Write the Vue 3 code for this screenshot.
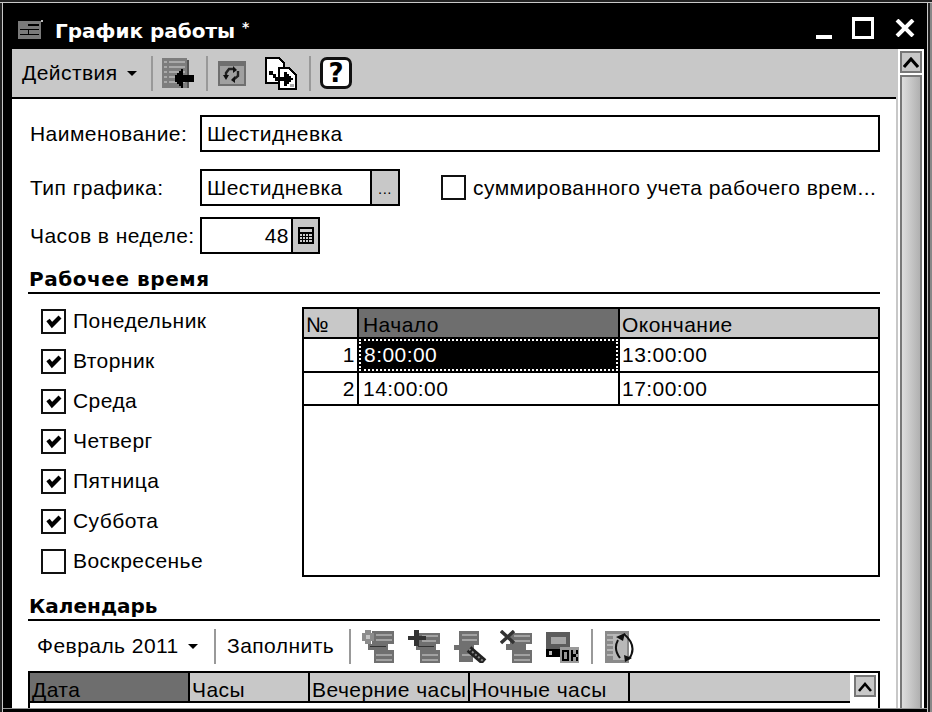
<script setup>
const days = [
  { name: 'Понедельник', on: true },
  { name: 'Вторник', on: true },
  { name: 'Среда', on: true },
  { name: 'Четверг', on: true },
  { name: 'Пятница', on: true },
  { name: 'Суббота', on: true },
  { name: 'Воскресенье', on: false }
]
</script>

<template>
  <div class="win">
    <div class="title">
      <svg class="t-icon" width="25" height="19" viewBox="0 0 25 19" shape-rendering="crispEdges">
        <rect x="0" y="1" width="23" height="18" fill="#7a7a7a"/>
        <rect x="23" y="0" width="2" height="2" fill="#bbb"/>
        <rect x="10" y="4" width="11" height="2" fill="#000"/>
        <rect x="2" y="9" width="19" height="1" fill="#000"/>
        <rect x="2" y="14" width="19" height="1" fill="#000"/>
        <rect x="10" y="9" width="1" height="6" fill="#000"/>
      </svg>
      <span class="t-text">График работы <span class="t-star">*</span></span>
      <div class="t-btns">
        <span class="b-min"></span>
        <span class="b-max"></span>
        <svg class="b-close" width="20" height="18" viewBox="0 0 20 18"><path d="M2 1 L18 17 M18 1 L2 17" stroke="#fff" stroke-width="4"/></svg>
      </div>
    </div>

    <div class="body">
      <div class="left">
        <div class="toolbar">
          <span class="tb-menu">Действия <i class="arrow"></i></span>
          <i class="sep s1"></i>
          <svg class="ic i-back" width="33" height="31" viewBox="0 0 33 31" shape-rendering="crispEdges">
            <rect x="0" y="0" width="25" height="30" fill="#7d7d7d"/>
            <rect x="25" y="2" width="2" height="28" fill="#555"/>
            <g fill="#a9a9a9">
              <rect x="7" y="3" width="16" height="2"/><rect x="7" y="8" width="16" height="2"/>
              <rect x="7" y="13" width="16" height="2"/><rect x="7" y="18" width="16" height="2"/>
              <rect x="7" y="23" width="16" height="2"/>
              <rect x="2" y="3" width="3" height="2"/><rect x="2" y="8" width="3" height="2"/>
              <rect x="2" y="13" width="3" height="2"/><rect x="2" y="18" width="3" height="2"/>
              <rect x="2" y="23" width="3" height="2"/>
            </g>
            <path d="M13 17h2v-2h2v-2h2v-2h2v6h11v7H21v6h-2v-2h-2v-2h-2v-2h-2z" fill="#000"/>
          </svg>
          <i class="sep s2"></i>
          <svg class="ic i-ref" width="28" height="25" viewBox="0 0 28 25">
            <rect width="28" height="25" fill="#6f6f6f"/>
            <rect x="2" y="5" width="24" height="18" fill="#a0a0a0"/>
            <path d="M16 8 L11 8 L8 12 L8 15 M20 10 L20 15 L15 19" fill="none" stroke="#222" stroke-width="2.4"/>
            <path d="M5 14 L11 14 L8 19 Z M15 5 L19 9 L15 12 Z M13 19 L17 15 L17 22 Z" fill="#111"/>
          </svg>
          <svg class="ic i-copy" width="33" height="33" viewBox="0 0 33 33" shape-rendering="crispEdges">
            <path d="M1 1h13l5 5v20H1z" fill="#fff" stroke="#000" stroke-width="2"/>
            <path d="M14 11h10l7 7v14H14z" fill="#fff" stroke="#000" stroke-width="2"/>
            <path d="M4 14h4v3h3v3h8v-5h3v2h2v2h2v2h2v2h-2v2h-2v2h-2v2h-3v-5h-9v-3H8v-3H4z" fill="#000"/>
            <rect x="25" y="27" width="4" height="3" fill="#aaa"/>
          </svg>
          <i class="sep s3"></i>
          <span class="ic i-help">?</span>
        </div>
        <div class="form">
          <div class="row r1">
            <label class="lbl">Наименование:</label>
            <div class="field f-name">Шестидневка</div>
          </div>
          <div class="row r2">
            <label class="lbl">Тип графика:</label>
            <div class="field f-type">Шестидневка<span class="sel">...</span></div>
            <span class="cb cb-sum"></span>
            <span class="sum-label">суммированного учета рабочего врем...</span>
          </div>
          <div class="row r3">
            <label class="lbl">Часов в неделе:</label>
            <div class="field f-hours"><span class="num">48</span><span class="calc">
              <svg width="16" height="17" viewBox="0 0 16 17" shape-rendering="crispEdges">
                <rect width="16" height="17" fill="#000"/>
                <rect x="2" y="2" width="12" height="3" fill="#ccc"/>
                <g fill="#ccc">
                  <rect x="2" y="7" width="2" height="2"/><rect x="5" y="7" width="2" height="2"/><rect x="8" y="7" width="2" height="2"/><rect x="11" y="7" width="3" height="2"/>
                  <rect x="2" y="10" width="2" height="2"/><rect x="5" y="10" width="2" height="2"/><rect x="8" y="10" width="2" height="2"/><rect x="11" y="10" width="3" height="2"/>
                  <rect x="2" y="13" width="2" height="2"/><rect x="5" y="13" width="2" height="2"/><rect x="8" y="13" width="2" height="2"/><rect x="11" y="13" width="3" height="2"/>
                </g>
              </svg>
            </span></div>
          </div>

          <div class="section s-work">Рабочее время</div>

          <div class="work">
            <div class="days">
              <div v-for="d in days" :key="d.name" class="day">
                <span class="cb">
                  <svg v-if="d.on" width="20" height="20" viewBox="0 0 20 20"><path d="M4 9 L8 14 L16 6" fill="none" stroke="#000" stroke-width="4.2"/></svg>
                </span>
                <span class="day-name">{{ d.name }}</span>
              </div>
            </div>
            <div class="grid">
              <div class="g-head">
                <span class="c-n">№</span>
                <span class="c-a active">Начало</span>
                <span class="c-b">Окончание</span>
              </div>
              <div class="g-row g-first">
                <span class="c-n num-cell">1</span>
                <span class="c-a selected"><span>8:00:00</span></span>
                <span class="c-b">13:00:00</span>
              </div>
              <div class="g-row">
                <span class="c-n num-cell">2</span>
                <span class="c-a">14:00:00</span>
                <span class="c-b">17:00:00</span>
              </div>
            </div>
          </div>

          <div class="section s-cal">Календарь</div>

          <div class="cal-bar">
            <span class="cal-month">Февраль 2011 <i class="arrow"></i></span>
            <i class="sep cs1"></i>
            <span class="cal-fill">Заполнить</span>
            <i class="sep cs2"></i>
            <svg class="cic" width="33" height="33" viewBox="0 0 33 33" shape-rendering="crispEdges">
              <g fill="#707070">
                <rect x="10" y="1" width="22" height="13"/><rect x="6" y="14" width="20" height="6"/><rect x="12" y="20" width="20" height="13"/>
              </g>
              <g fill="#a2a2a2">
                <rect x="14" y="4" width="16" height="2"/><rect x="14" y="9" width="16" height="2"/><rect x="14" y="24" width="16" height="2"/><rect x="14" y="29" width="16" height="2"/>
              </g>
              <rect x="8" y="16" width="16" height="1" fill="#333"/>
              <rect x="0" y="3" width="12" height="8" fill="#8c8c8c"/><rect x="3" y="0" width="6" height="14" fill="#8c8c8c"/><rect x="4" y="5" width="4" height="4" fill="#c4c4c4"/>
            </svg>
            <svg class="cic" width="33" height="33" viewBox="0 0 33 33" shape-rendering="crispEdges">
              <g fill="#707070">
                <rect x="10" y="3" width="22" height="11"/><rect x="8" y="14" width="20" height="6"/><rect x="12" y="20" width="20" height="13"/>
              </g>
              <g fill="#a2a2a2">
                <rect x="14" y="5" width="16" height="2"/><rect x="14" y="10" width="14" height="2"/><rect x="14" y="24" width="16" height="2"/><rect x="14" y="29" width="16" height="2"/>
              </g>
              <rect x="10" y="16" width="16" height="1" fill="#333"/>
              <rect x="0" y="6" width="18" height="4" fill="#333"/><rect x="6" y="0" width="5" height="16" fill="#333"/>
            </svg>
            <svg class="cic" width="33" height="33" viewBox="0 0 33 33">
              <g fill="#707070" shape-rendering="crispEdges">
                <rect x="5" y="1" width="20" height="14"/><rect x="0" y="15" width="20" height="5"/><rect x="5" y="20" width="14" height="12"/>
              </g>
              <g fill="#a2a2a2" shape-rendering="crispEdges">
                <rect x="8" y="4" width="15" height="2"/><rect x="8" y="9" width="15" height="2"/><rect x="8" y="24" width="9" height="2"/>
              </g>
              <path d="M15 19 L30 32" stroke="#222" stroke-width="7"/>
              <path d="M15 19 L29 31" stroke="#888" stroke-width="2" stroke-dasharray="2 2"/>
            </svg>
            <svg class="cic" width="33" height="33" viewBox="0 0 33 33">
              <g fill="#707070" shape-rendering="crispEdges">
                <rect x="10" y="3" width="22" height="11"/><rect x="6" y="14" width="20" height="6"/><rect x="12" y="20" width="20" height="13"/>
              </g>
              <g fill="#a2a2a2" shape-rendering="crispEdges">
                <rect x="14" y="5" width="16" height="2"/><rect x="14" y="10" width="16" height="2"/><rect x="14" y="24" width="16" height="2"/><rect x="14" y="29" width="16" height="2"/>
              </g>
              <path d="M1 1 L14 13 M14 1 L1 13" stroke="#333" stroke-width="3.4"/>
            </svg>
            <svg class="cic" width="33" height="33" viewBox="0 0 33 33" shape-rendering="crispEdges">
              <rect x="0" y="2" width="24" height="25" fill="#5c5c5c"/>
              <rect x="5" y="7" width="15" height="7" fill="#a5a5a5"/>
              <rect x="0" y="19" width="14" height="8" fill="#000"/>
              <rect x="3" y="21" width="3" height="4" fill="#bbb"/>
              <rect x="14" y="17" width="19" height="16" fill="#9a9a9a"/>
              <g fill="#000">
                <rect x="16" y="20" width="2" height="11"/><rect x="21" y="20" width="2" height="11"/><rect x="18" y="20" width="3" height="2"/><rect x="18" y="29" width="3" height="2"/>
                <rect x="25" y="20" width="2" height="11"/><rect x="30" y="20" width="2" height="4"/><rect x="30" y="27" width="2" height="4"/><rect x="27" y="24" width="3" height="3"/>
              </g>
            </svg>
            <i class="sep cs3"></i>
            <svg class="cic last" width="32" height="33" viewBox="0 0 32 33">
              <rect x="0" y="1" width="24" height="32" fill="#8a8a8a" shape-rendering="crispEdges"/>
              <g fill="#b5b5b5" shape-rendering="crispEdges">
                <rect x="2" y="4" width="6" height="2"/><rect x="2" y="9" width="6" height="2"/><rect x="2" y="14" width="6" height="2"/><rect x="2" y="19" width="6" height="2"/><rect x="2" y="24" width="6" height="2"/>
              </g>
              <rect x="8" y="4" width="14" height="26" fill="#b8b8b8"/>
              <path d="M13 10 Q8 19 15 28 M19 4 Q33 16 24 29" fill="none" stroke="#111" stroke-width="2"/>
              <path d="M11 7 L20 3 L18 11 Z M19 25 L27 28 L20 32 Z" fill="#111"/>
            </svg>
          </div>

          <div class="cal-grid">
            <div class="cal-head">
              <span class="h-date">Дата</span>
              <span class="h-hours">Часы</span>
              <span class="h-eve">Вечерние часы</span>
              <span class="h-night">Ночные часы</span>
              <span class="h-rest"></span>
            </div>
            <div class="cal-side">
              <span class="up small"><svg width="16" height="11" viewBox="0 0 16 11"><path d="M2 10 L8 3 L14 10" fill="none" stroke="#000" stroke-width="2.6"/></svg></span>
            </div>
          </div>
        </div>
      </div>
      <div class="scroll">
        <span class="up"><svg width="16" height="11" viewBox="0 0 16 11"><path d="M1 10 L8 2 L15 10" fill="none" stroke="#000" stroke-width="3"/></svg></span>
        <span class="thumb"></span>
      </div>
    </div>
  </div>
</template>

<style>
html, body { margin: 0; background: #000; }
</style>

<style scoped>
.win {
  width: 932px;
  height: 712px;
  box-sizing: border-box;
  background: #000;
  padding: 3px 8px 4px 12px;
  display: flex;
  flex-direction: column;
  overflow: hidden;
  box-shadow: inset 0 2px #222, inset 0 3px #c8c8c8, inset 2px 0 #222, inset 3px 0 #c8c8c8,
    inset -2px 0 #888, inset -4px 0 #222, inset -5px 0 #c8c8c8, inset 0 -3px #000, inset 0 -4px #999;
  font: 21px "Liberation Sans", Arial, sans-serif;
  letter-spacing: 0.45px;
  color: #000;
}
.title {
  height: 46px;
  flex: none;
  display: flex;
  align-items: center;
  color: #fff;
  padding-top: 10px;
  box-sizing: border-box;
}
.t-icon { margin-left: 6px; margin-top: -3px; flex: none; }
.t-text {
  margin-left: 12px;
  font: bold 20px "DejaVu Sans", sans-serif;
  letter-spacing: 0;
  white-space: nowrap;
  margin-top: -1px;
}
.t-star { font-size: 14px; vertical-align: 6px; }
.t-btns {
  margin-left: auto;
  display: flex;
  align-items: flex-end;
  margin-top: -9px;
  height: 24px;
}
.b-min { width: 16px; height: 4px; background: #fff; margin-right: 20px; margin-bottom: 0; }
.b-max { width: 22px; height: 22px; box-sizing: border-box; border: 3px solid #fff; border-top-width: 4px; margin-right: 21px; }
.b-close { margin-right: 9px; margin-bottom: 2px; }

.body { flex: 1; display: flex; min-height: 0; }
.left { width: 884px; flex: none; background: #fff; display: flex; flex-direction: column; }
.toolbar {
  height: 50px;
  flex: none;
  box-sizing: border-box;
  background: #c8c8c8;
  border-bottom: 2px solid #000;
  display: flex;
  align-items: center;
  padding-left: 10px;
}
.tb-menu { white-space: nowrap; width: 129px; flex: none; display: flex; align-items: center; gap: 9px; }
.arrow { display: inline-block; width: 0; height: 0; border: 5px solid transparent; border-top: 5px solid #000; border-bottom: 0; }
.sep { display: block; width: 2px; background: #999; height: 35px; flex: none; }
.s1 { margin-right: 9px; }
.ic { flex: none; }
.i-back { margin-right: 11px; }
.s2 { margin-right: 10px; }
.i-ref { margin-right: 19px; }
.i-copy { margin-right: 11px; }
.s3 { margin-right: 9px; }
.i-help {
  width: 32px;
  height: 32px;
  box-sizing: border-box;
  border: 3px solid #111;
  border-radius: 7px;
  background: #fff;
  font: bold 26px/26px "DejaVu Sans", sans-serif;
  letter-spacing: 0;
  text-align: center;
}

.form { flex: 1; min-height: 0; padding: 16px 16px 0; display: flex; flex-direction: column; }
.row { display: flex; align-items: center; height: 37px; flex: none; position: relative; }
.r2 { margin-top: 17px; }
.r3 { margin-top: 11px; }
.lbl { width: 172px; padding-left: 2px; box-sizing: border-box; white-space: nowrap; flex: none; }
.field {
  height: 37px;
  box-sizing: border-box;
  border: 2px solid #000;
  padding-left: 5px;
  line-height: 33px;
  white-space: nowrap;
  display: flex;
}
.f-name { width: 680px; }
.f-type { width: 200px; position: relative; }
.sel {
  margin-left: auto;
  width: 28px;
  background: #c8c8c8;
  border-left: 2px solid #000;
  box-sizing: border-box;
  text-align: center;
  line-height: 36px;
  font-size: 15px;
}
.cb {
  width: 25px;
  height: 25px;
  box-sizing: border-box;
  border: 2px solid #111;
  display: flex;
  align-items: center;
  justify-content: center;
  background: #fff;
  flex: none;
}
.cb-sum { margin-left: 41px; }
.sum-label { margin-left: 7px; white-space: nowrap; }
.f-hours { width: 120px; padding: 0; }
.num { width: 89px; text-align: right; padding-right: 2px; box-sizing: border-box; flex: none; }
.calc {
  flex: 1;
  background: #c8c8c8;
  border-left: 2px solid #000;
  display: flex;
  align-items: center;
  justify-content: center;
}
.section {
  flex: none;
  border-bottom: 2px solid #000;
  font: bold 20px/29px "DejaVu Sans", sans-serif;
  letter-spacing: 0;
  height: 27px;
  box-sizing: content-box;
  padding-left: 1px;
}
.s-work { margin-top: 11px; letter-spacing: 0.55px; }
.s-cal { margin-top: 15px; }
.work { display: flex; flex: none; height: 270px; margin-top: 13px; }
.days { width: 274px; flex: none; padding-left: 13px; box-sizing: border-box; display: flex; flex-direction: column; }
.day { height: 40px; display: flex; align-items: center; flex: none; position: relative; top: -6px; }
.day-name { margin-left: 7px; white-space: nowrap; }
.grid {
  flex: 1;
  border: 2px solid #000;
  box-sizing: border-box;
}
.g-head { display: flex; height: 30px; background: #c8c8c8; border-bottom: 2px solid #000; box-sizing: border-box; line-height: 32px; }
.g-row { display: flex; height: 33px; border-bottom: 2px solid #000; box-sizing: border-box; line-height: 32px; }
.g-first { height: 34px; }
.c-n { width: 55px; flex: none; box-sizing: border-box; padding-left: 2px; border-right: 2px solid #000; white-space: nowrap; }
.c-a { width: 261px; flex: none; box-sizing: border-box; padding-left: 4px; border-right: 2px solid #000; }
.c-b { flex: 1; padding-left: 2px; }
.num-cell { text-align: right; padding: 0 2px 0 0; }
.active { background: #6e6e6e; }
.selected { padding: 0; background: #000; color: #fff; }
.selected span {
  display: block;
  height: 100%;
  box-sizing: border-box;
  border: 2px dotted #fff;
  padding-left: 3px;
  line-height: 28px;
}
.cal-bar { flex: none; height: 50px; display: flex; align-items: center; position: relative; }
.cal-month { margin-left: 9px; width: 177px; flex: none; white-space: nowrap; display: flex; align-items: center; gap: 9px; }
.cal-fill { margin-left: 11px; width: 122px; flex: none; white-space: nowrap; }
.cs2 { margin-right: 11px; }
.cic { flex: none; margin-right: 13px; }
.cs3 { margin-left: -1px; margin-right: 12px; }
.last { margin-right: 0; }
.cal-grid {
  flex: 1;
  min-height: 0;
  border: 2px solid #000;
  border-bottom: 0;
  display: flex;
  overflow: hidden;
}
.cal-head {
  width: 820px;
  height: 30px;
  flex: none;
  display: flex;
  background: #c8c8c8;
  border-bottom: 2px solid #000;
  box-sizing: border-box;
  line-height: 33px;
  white-space: nowrap;
}
.cal-head span { box-sizing: border-box; border-right: 2px solid #000; padding-left: 2px; flex: none; }
.h-date { width: 160px; background: #6e6e6e; }
.h-hours { width: 120px; }
.h-eve { width: 160px; overflow: hidden; }
.h-night { width: 160px; }
.cal-head .h-rest { flex: 1; border-right: 0; }
.cal-side { flex: 1; background: #fff; display: flex; flex-direction: column; align-items: center; padding-left: 2px; box-sizing: border-box; }
.up {
  box-sizing: border-box;
  width: 22px;
  height: 22px;
  border: 2px solid #777;
  background: #c8c8c8;
  display: flex;
  align-items: center;
  justify-content: center;
  flex: none;
}
.small { margin-top: 2px; }
.scroll {
  width: 28px;
  flex: none;
  background: #fff;
  display: flex;
  flex-direction: column;
  align-items: center;
  box-sizing: border-box;
  padding-top: 2px;
  gap: 2px;
  border-left: 2px solid #c8c8c8;
}
.thumb {
  flex: 1;
  width: 22px;
  box-sizing: border-box;
  border: 2px solid #777;
  border-bottom: 0;
  background: linear-gradient(90deg, #ddd, #b0b0b0);
}
</style>
